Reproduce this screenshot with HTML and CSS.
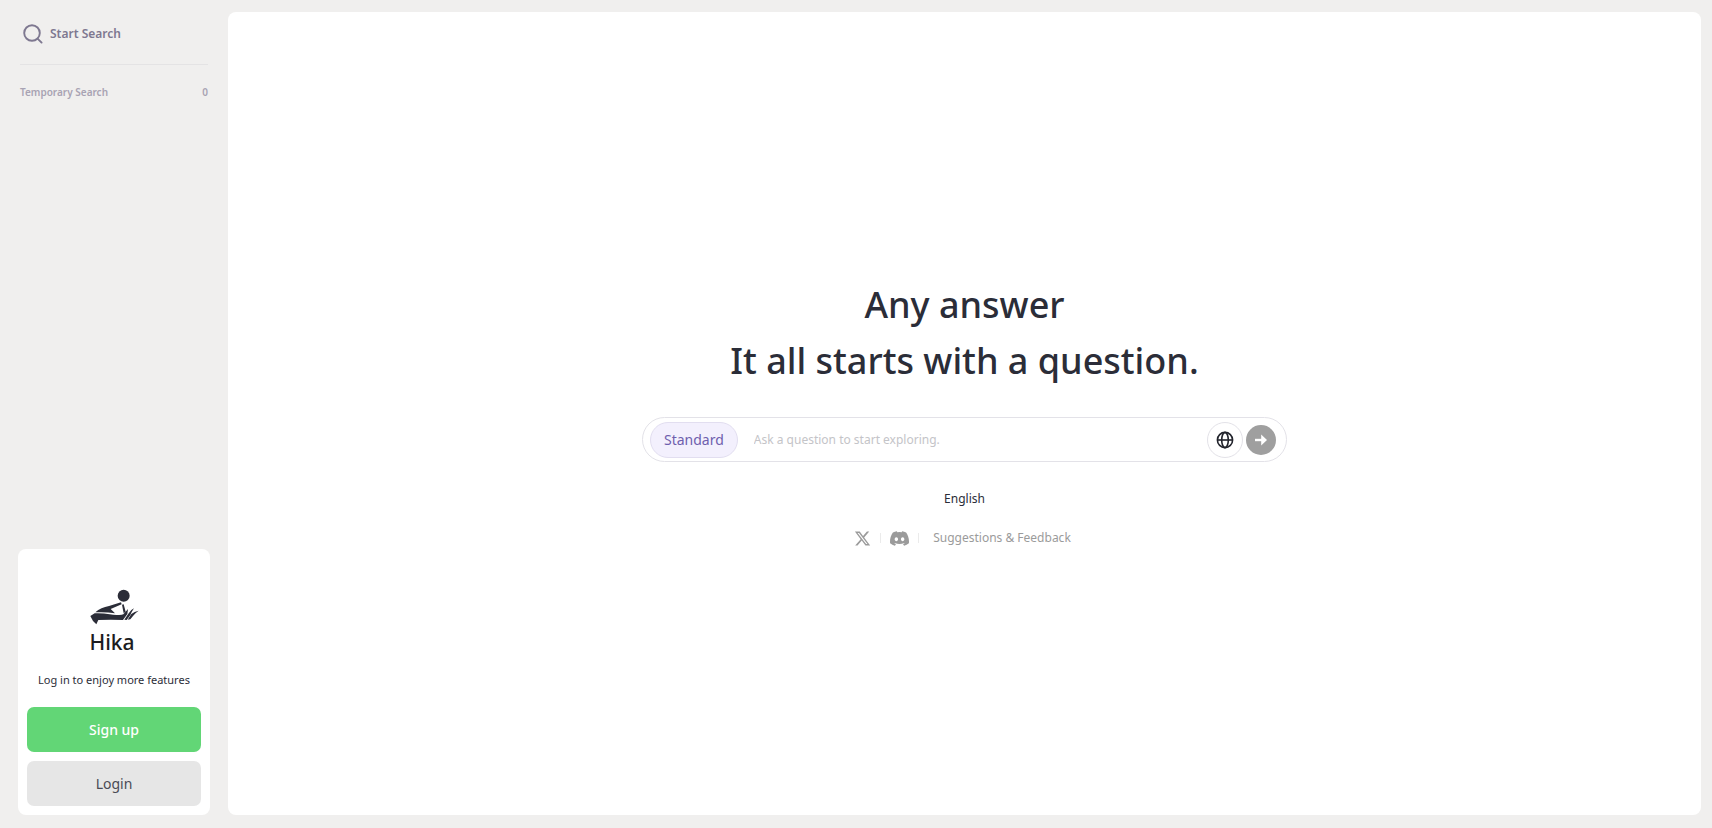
FILE: index.html
```html
<!DOCTYPE html>
<html lang="en">
<head>
  <meta charset="UTF-8">
  <meta name="viewport" content="width=device-width, initial-scale=1">
  <title>Hika</title>
  <link rel="stylesheet" href="styles.css">
</head>
<body>
  <div class="layout">
    <!-- Sidebar -->
    <aside class="sidebar">
      <a class="start-search" href="#">
        <svg width="20" height="20" viewBox="0 0 20 20" fill="none" stroke="currentColor" stroke-width="1.9" stroke-linecap="round">
          <circle cx="9" cy="9" r="7.8"/>
          <path d="M14.8 14.8L18.6 18.6"/>
        </svg>
        Start Search
      </a>
      <div class="history">
        <span>Temporary Search</span>
        <span>0</span>
      </div>

      <div class="login-card">
        <svg class="logo" width="49" height="36" viewBox="267 180 147 108" fill="#2b2d38">
          <circle cx="368" cy="200" r="18"/>
          <path d="M283 250C294 240 308 234 324 231L360 220L362 226L329 240L342 253Q314 248 283 250Z"/>
          <path d="M363 227L368 226L374 248L368 253Z"/>
          <path d="M268 261L281 253Q306 252 326 256Q344 260 362 257L367 256L381 240L379 255L366 273Q330 271 292 273L286 286L276 276Z"/>
          <path d="M370 272L382 254Q388 243 399 238Q391 250 388 258L377 273Z"/>
          <path d="M380 272L391 255Q400 247 413 245Q401 253 396 261L388 271Z"/>
        </svg>
        <h2 class="brand">Hika</h2>
        <p class="login-text">Log in to enjoy more features</p>
        <button class="btn btn-signup" type="button">Sign up</button>
        <button class="btn btn-login" type="button">Login</button>
      </div>
    </aside>

    <!-- Main panel -->
    <main class="main">
      <h1>Any answer<br>It all starts with a question.</h1>

      <form class="search-bar">
        <button class="mode" type="button">Standard</button>
        <input class="question" type="text" aria-label="Question" placeholder="Ask a question to start exploring.">
        <button class="globe" type="button" aria-label="Web">
          <svg width="18" height="18" viewBox="0 0 18 18" fill="none" stroke="currentColor" stroke-width="1.6">
            <circle cx="9" cy="9" r="7.6"/>
            <ellipse cx="9" cy="9" rx="3.3" ry="7.6"/>
            <path d="M1.5 9H16.5"/>
          </svg>
        </button>
        <button class="send" type="submit" aria-label="Send">
          <svg width="14" height="14" viewBox="0 0 14 14" fill="none">
            <path d="M1 7H9" stroke="currentColor" stroke-width="2.4"/>
            <path d="M7.2 1.6L13 7L7.2 12.4Z" fill="currentColor"/>
          </svg>
        </button>
      </form>

      <button class="language" type="button">English</button>

      <div class="links">
        <a href="#" aria-label="X">
          <svg width="17" height="17" viewBox="0 0 24 24" fill="currentColor">
            <path d="M18.244 2.25h3.308l-7.227 8.26 8.502 11.24H16.17l-5.214-6.817L4.99 21.75H1.68l7.73-8.835L1.254 2.25H8.08l4.713 6.231zm-1.161 17.52h1.833L7.084 4.126H5.117z"/>
          </svg>
        </a>
        <span class="divider"></span>
        <a href="#" aria-label="Discord">
          <svg width="19" height="19" viewBox="0 0 24 24" fill="currentColor">
            <path d="M20.317 4.37a19.8 19.8 0 0 0-4.885-1.515.074.074 0 0 0-.079.037c-.21.375-.444.865-.608 1.25a18.3 18.3 0 0 0-5.487 0 12.6 12.6 0 0 0-.617-1.25.077.077 0 0 0-.079-.037A19.7 19.7 0 0 0 3.677 4.37a.07.07 0 0 0-.032.027C.533 9.046-.32 13.58.099 18.057a.08.08 0 0 0 .031.057 19.9 19.9 0 0 0 5.993 3.03.078.078 0 0 0 .084-.028c.462-.63.874-1.295 1.226-1.994a.076.076 0 0 0-.041-.106 13.1 13.1 0 0 1-1.872-.892.077.077 0 0 1-.008-.128l.372-.292a.074.074 0 0 1 .077-.01c3.928 1.793 8.18 1.793 12.062 0a.074.074 0 0 1 .078.01l.373.292a.077.077 0 0 1-.006.127 12.3 12.3 0 0 1-1.873.892.077.077 0 0 0-.041.107c.36.698.772 1.362 1.225 1.993a.076.076 0 0 0 .084.028 19.8 19.8 0 0 0 6.002-3.03.077.077 0 0 0 .032-.054c.5-5.177-.838-9.674-3.549-13.66a.06.06 0 0 0-.031-.03zM8.02 15.33c-1.183 0-2.157-1.085-2.157-2.419s.956-2.419 2.157-2.419c1.21 0 2.176 1.096 2.157 2.42 0 1.333-.956 2.418-2.157 2.418zm7.975 0c-1.183 0-2.157-1.085-2.157-2.419s.955-2.419 2.157-2.419c1.21 0 2.176 1.096 2.157 2.42 0 1.333-.946 2.418-2.157 2.418z"/>
          </svg>
        </a>
        <span class="divider"></span>
        <a class="feedback" href="#">Suggestions &amp; Feedback</a>
      </div>
    </main>
  </div>
</body>
</html>
```
FILE: styles.css
```css
/* Reset & Basic Styling */
* {
  box-sizing: border-box;
  margin: 0;
  padding: 0;
}
body {
  font-family: 'Noto Sans', 'Open Sans', sans-serif;
  background: #f0efee;
  color: #2b2d38;
}
button,
input {
  font-family: inherit;
  border: none;
  background: none;
}
button {
  cursor: pointer;
}
a {
  color: inherit;
  text-decoration: none;
}
svg {
  display: block;
}
.layout {
  display: flex;
  gap: 18px;
  min-height: 100vh;
  padding: 12px 11px 13px 18px;
}
/* Sidebar */
.sidebar {
  display: flex;
  flex-direction: column;
  flex-shrink: 0;
  width: 192px;
}
.start-search {
  display: flex;
  align-items: center;
  gap: 7px;
  height: 53px;
  margin: 0 2px;
  padding: 0 3px 9px;
  border-bottom: 1px solid #e4e3e4;
  color: #7e7890;
  font-size: 12px;
  font-weight: 600;
}
.history {
  display: flex;
  justify-content: space-between;
  margin: 18px 2px;
  color: #a8a3b3;
  font-size: 10px;
  line-height: 18px;
  font-weight: 600;
}
.login-card {
  display: flex;
  flex-direction: column;
  align-items: center;
  margin-top: auto;
  padding: 40px 9px;
  padding-bottom: 9px;
  border-radius: 8px;
  background: #fff;
}
.brand {
  margin: 0 4px 12px 0;
  font-size: 21px;
  line-height: 34px;
  font-weight: 500;
  color: #1c1c20;
}
.login-text {
  margin-bottom: 18px;
  font-size: 11px;
  line-height: 18px;
}
.btn {
  width: 100%;
  height: 45px;
  border-radius: 7px;
  font-size: 14px;
}
.btn-signup {
  margin-bottom: 9px;
  background: #62d676;
  color: #fff;
  font-weight: 500;
}
.btn-login {
  background: #e6e6e6;
  color: #4a4b55;
}
/* Main panel */
.main {
  display: flex;
  flex: 1;
  flex-direction: column;
  align-items: center;
  justify-content: center;
  padding-bottom: 2px;
  border-radius: 8px;
  background: #fff;
}
h1 {
  margin-bottom: 28px;
  font-size: 36px;
  line-height: 56px;
  font-weight: 500;
  text-align: center;
}
/* Search bar */
.search-bar {
  display: flex;
  align-items: center;
  width: 100%;
  max-width: 645px;
  height: 45px;
  padding: 0 10px 0 7px;
  border: 1px solid #e3e2e8;
  border-radius: 23px;
}
.mode {
  height: 36px;
  padding: 0 13px;
  border: 1px solid #e2def0;
  border-radius: 18px;
  background: #f3f0fd;
  color: #6f5fae;
  font-size: 14px;
}
.question {
  flex: 1;
  min-width: 0;
  padding: 0 16px;
  outline: none;
  color: #2b2d38;
  font-size: 12px;
}
.question::placeholder {
  color: #c4c4c8;
}
.globe,
.send {
  display: flex;
  align-items: center;
  justify-content: center;
  border-radius: 50%;
}
.globe {
  width: 36px;
  height: 36px;
  margin-right: 3px;
  border: 1px solid #e3e2e8;
  color: #22242c;
}
.send {
  width: 30px;
  height: 30px;
  background: #9f9f9f;
  color: #fff;
}
/* Footer links */
.language {
  margin: 28px 0 20px;
  color: #2b2d38;
  font-size: 12px;
  line-height: 18px;
}
.links {
  display: flex;
  align-items: center;
  padding-right: 4px;
  color: #9b9b9b;
}
.divider {
  width: 1px;
  height: 10px;
  margin: 0 9px;
  background: #ebebeb;
}
.feedback {
  margin-left: 5px;
  font-size: 12px;
  line-height: 20px;
}
/* Responsive adjustments */
@media (max-width: 700px) {
  .layout {
    flex-direction: column;
  }
  .sidebar {
    width: 100%;
  }
  .main {
    padding: 32px 16px;
  }
  h1 {
    font-size: 28px;
    line-height: 40px;
  }
}
```
